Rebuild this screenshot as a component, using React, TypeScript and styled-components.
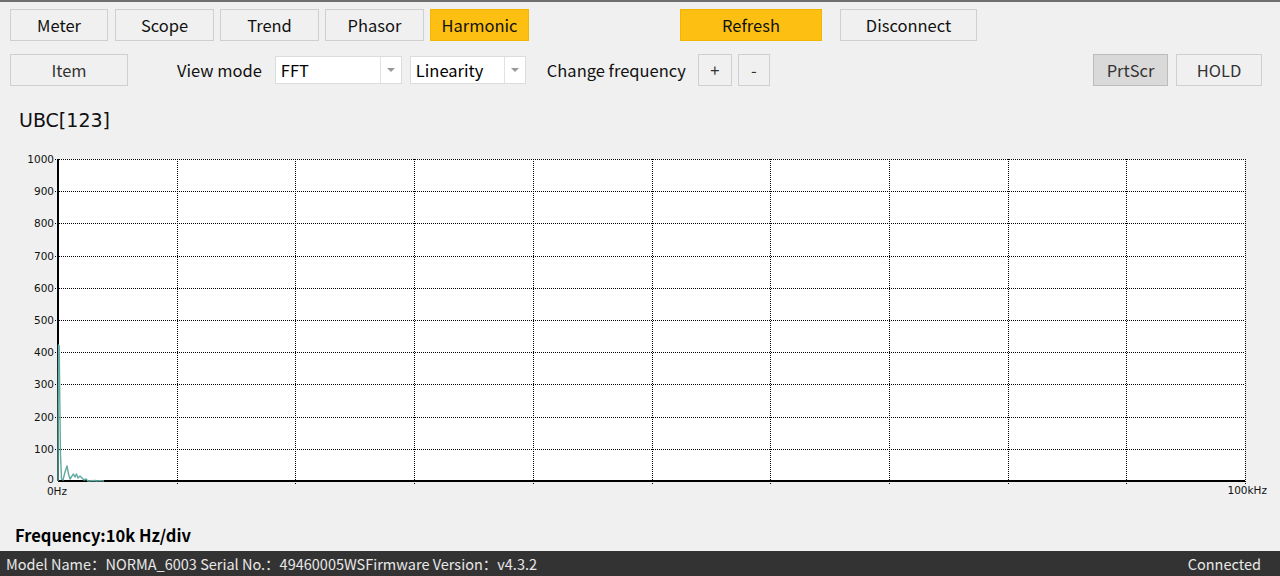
import React from 'react';
import styled, { createGlobalStyle, css } from 'styled-components';

const GlobalStyle = createGlobalStyle`
  html, body {
    margin: 0;
    padding: 0;
    background: #f0f0f0;
  }
  body {
    font-family: "Noto Sans CJK SC", "Noto Sans", sans-serif;
    color: #000;
  }
`;

const Page = styled.div`
  width: 1280px;
  height: 576px;
  display: flex;
  flex-direction: column;
  border-top: 2px solid #6f6f6f;
  box-sizing: border-box;
  overflow: hidden;
`;

const Row = styled.div<{ $top: number }>`
  display: flex;
  align-items: center;
  padding: 0 18px 0 10px;
  margin-top: ${(p) => p.$top}px;
  height: 32px;
`;

const TabButton = styled.button<{ $active?: boolean; $w: number; $gap?: number }>`
  width: ${(p) => p.$w}px;
  height: 32px;
  margin-left: ${(p) => p.$gap ?? 0}px;
  box-sizing: border-box;
  border: 1px solid #cfcfcf;
  background: #f0f0f0;
  font-family: inherit;
  font-size: 16.5px;
  color: #111;
  padding: 0;
  ${(p) =>
    p.$active &&
    css`
      background: #fdc012;
      border-color: #f2b500;
    `}
`;

const ToolButton = styled(TabButton)<{ $pressed?: boolean }>`
  color: #333;
  ${(p) =>
    p.$pressed &&
    css`
      background: #d9d9d9;
      border-color: #bcbcbc;
    `}
`;

const Label = styled.span<{ $gap: number }>`
  margin-left: ${(p) => p.$gap}px;
  font-size: 16.5px;
  color: #111;
  white-space: nowrap;
`;

const Select = styled.div<{ $w: number; $gap: number }>`
  width: ${(p) => p.$w}px;
  height: 28px;
  margin-left: ${(p) => p.$gap}px;
  box-sizing: border-box;
  border: 1px solid #dcdcdc;
  background: #fff;
  display: flex;
  align-items: center;
  font-size: 16.5px;
`;

const SelectText = styled.span`
  flex: 1;
  padding-left: 5px;
`;

const SelectArrow = styled.span`
  width: 20px;
  height: 100%;
  border-left: 1px solid #e2e2e2;
  display: flex;
  align-items: center;
  justify-content: center;
  &::after {
    content: '';
    border-left: 4px solid transparent;
    border-right: 4px solid transparent;
    border-top: 4px solid #999;
  }
`;

const Spacer = styled.div`
  flex: 1;
`;

const Title = styled.div`
  margin: 21px 0 0 19px;
  font-family: "DejaVu Sans", sans-serif;
  font-size: 19px;
  line-height: 26px;
  height: 26px;
  color: #111;
`;

const ChartBox = styled.div`
  margin-top: 15px;
  height: 352px;
  svg {
    display: block;
  }
`;

const Frequency = styled.div`
  margin: 24px 0 0 15px;
  font-size: 16.5px;
  font-weight: bold;
  line-height: 22px;
`;

const StatusBar = styled.div`
  margin-top: auto;
  height: 25px;
  background: #333333;
  color: #e8e8e8;
  font-size: 14.5px;
  display: flex;
  align-items: center;
  justify-content: space-between;
  padding: 0 19px 0 6px;
  white-space: pre;
`;

const PLOT_L = 58;
const PLOT_R = 1245;
const PLOT_T = 11;
const PLOT_B = 333;
const OFFSET = 148;

function Chart() {
  const xs = Array.from({ length: 11 }, (_, i) => PLOT_L + ((PLOT_R - PLOT_L) * i) / 10);
  const ys = Array.from({ length: 11 }, (_, i) => PLOT_T + ((PLOT_B - PLOT_T) * i) / 10);
  // spectrum samples in page pixels
  const trace: [number, number][] = [
    [58, 481], [58.5, 345], [59.2, 346], [59.8, 400], [60.5, 455], [61.5, 479],
    [63, 480], [65, 472], [67, 466], [68.5, 474], [70, 479], [72, 476], [73.5, 474],
    [75, 477], [76.5, 474], [78, 478], [80, 476], [82, 478], [84, 480], [86, 479],
    [88, 481], [95, 480.5], [97, 481], [100, 480.6], [104, 481],
  ];
  const d = trace.map(([x, y], i) => `${i ? 'L' : 'M'}${x} ${y - OFFSET}`).join(' ');
  return (
    <svg width={1280} height={352} viewBox="0 0 1280 352">
      <rect x={PLOT_L} y={PLOT_T} width={PLOT_R - PLOT_L} height={PLOT_B - PLOT_T} fill="#fff" />
      <g stroke="#000" strokeWidth={1} strokeDasharray="1 1" shapeRendering="crispEdges">
        {xs.slice(1).map((x) => (
          <line key={`v${x}`} x1={Math.round(x) + 0.5} y1={PLOT_T} x2={Math.round(x) + 0.5} y2={PLOT_B + 3} />
        ))}
        {ys.slice(0, 10).map((y) => (
          <line key={`h${y}`} x1={PLOT_L - 3} y1={Math.round(y) + 0.5} x2={PLOT_R} y2={Math.round(y) + 0.5} />
        ))}
      </g>
      <g stroke="#000" strokeWidth={1.4} shapeRendering="crispEdges">
        <line x1={PLOT_L} y1={PLOT_T} x2={PLOT_L} y2={PLOT_B} />
        <line x1={PLOT_L} y1={PLOT_B} x2={PLOT_R} y2={PLOT_B} />
      </g>
      <g fontFamily="DejaVu Sans, sans-serif" fontSize={10.5} fill="#111" textAnchor="end">
        {ys.map((y, i) => (
          <text key={`l${i}`} x={54} y={i === 10 ? y + 2 : y + 4}>
            {(10 - i) * 100}
          </text>
        ))}
        <text x={67} y={347}>0Hz</text>
        <text x={1267} y={346}>100kHz</text>
      </g>
      <path d={d} fill="none" stroke="#62aa9f" strokeWidth={1.4} strokeLinejoin="round" />
    </svg>
  );
}

export default function App() {
  return (
    <>
      <GlobalStyle />
      <Page>
        <Row $top={7}>
          <TabButton $w={98}>Meter</TabButton>
          <TabButton $w={99} $gap={7}>Scope</TabButton>
          <TabButton $w={99} $gap={6}>Trend</TabButton>
          <TabButton $w={99} $gap={6}>Phasor</TabButton>
          <TabButton $w={99} $gap={6} $active>Harmonic</TabButton>
          <TabButton $w={142} $gap={151} $active>Refresh</TabButton>
          <TabButton $w={137} $gap={18}>Disconnect</TabButton>
        </Row>
        <Row $top={13}>
          <ToolButton $w={118}>Item</ToolButton>
          <Label $gap={49}>View mode</Label>
          <Select $w={127} $gap={13}>
            <SelectText>FFT</SelectText>
            <SelectArrow />
          </Select>
          <Select $w={116} $gap={8}>
            <SelectText>Linearity</SelectText>
            <SelectArrow />
          </Select>
          <Label $gap={21}>Change frequency</Label>
          <ToolButton $w={34} $gap={12}>+</ToolButton>
          <ToolButton $w={32} $gap={6}>-</ToolButton>
          <Spacer />
          <ToolButton $w={75} $pressed>PrtScr</ToolButton>
          <ToolButton $w={86} $gap={8}>HOLD</ToolButton>
        </Row>
        <Title>UBC[123]</Title>
        <ChartBox>
          <Chart />
        </ChartBox>
        <Frequency>Frequency:10k Hz/div</Frequency>
        <StatusBar>
          <span>Model Name：NORMA_6003 Serial No.：49460005WSFirmware Version：v4.3.2</span>
          <span>Connected</span>
        </StatusBar>
      </Page>
    </>
  );
}
